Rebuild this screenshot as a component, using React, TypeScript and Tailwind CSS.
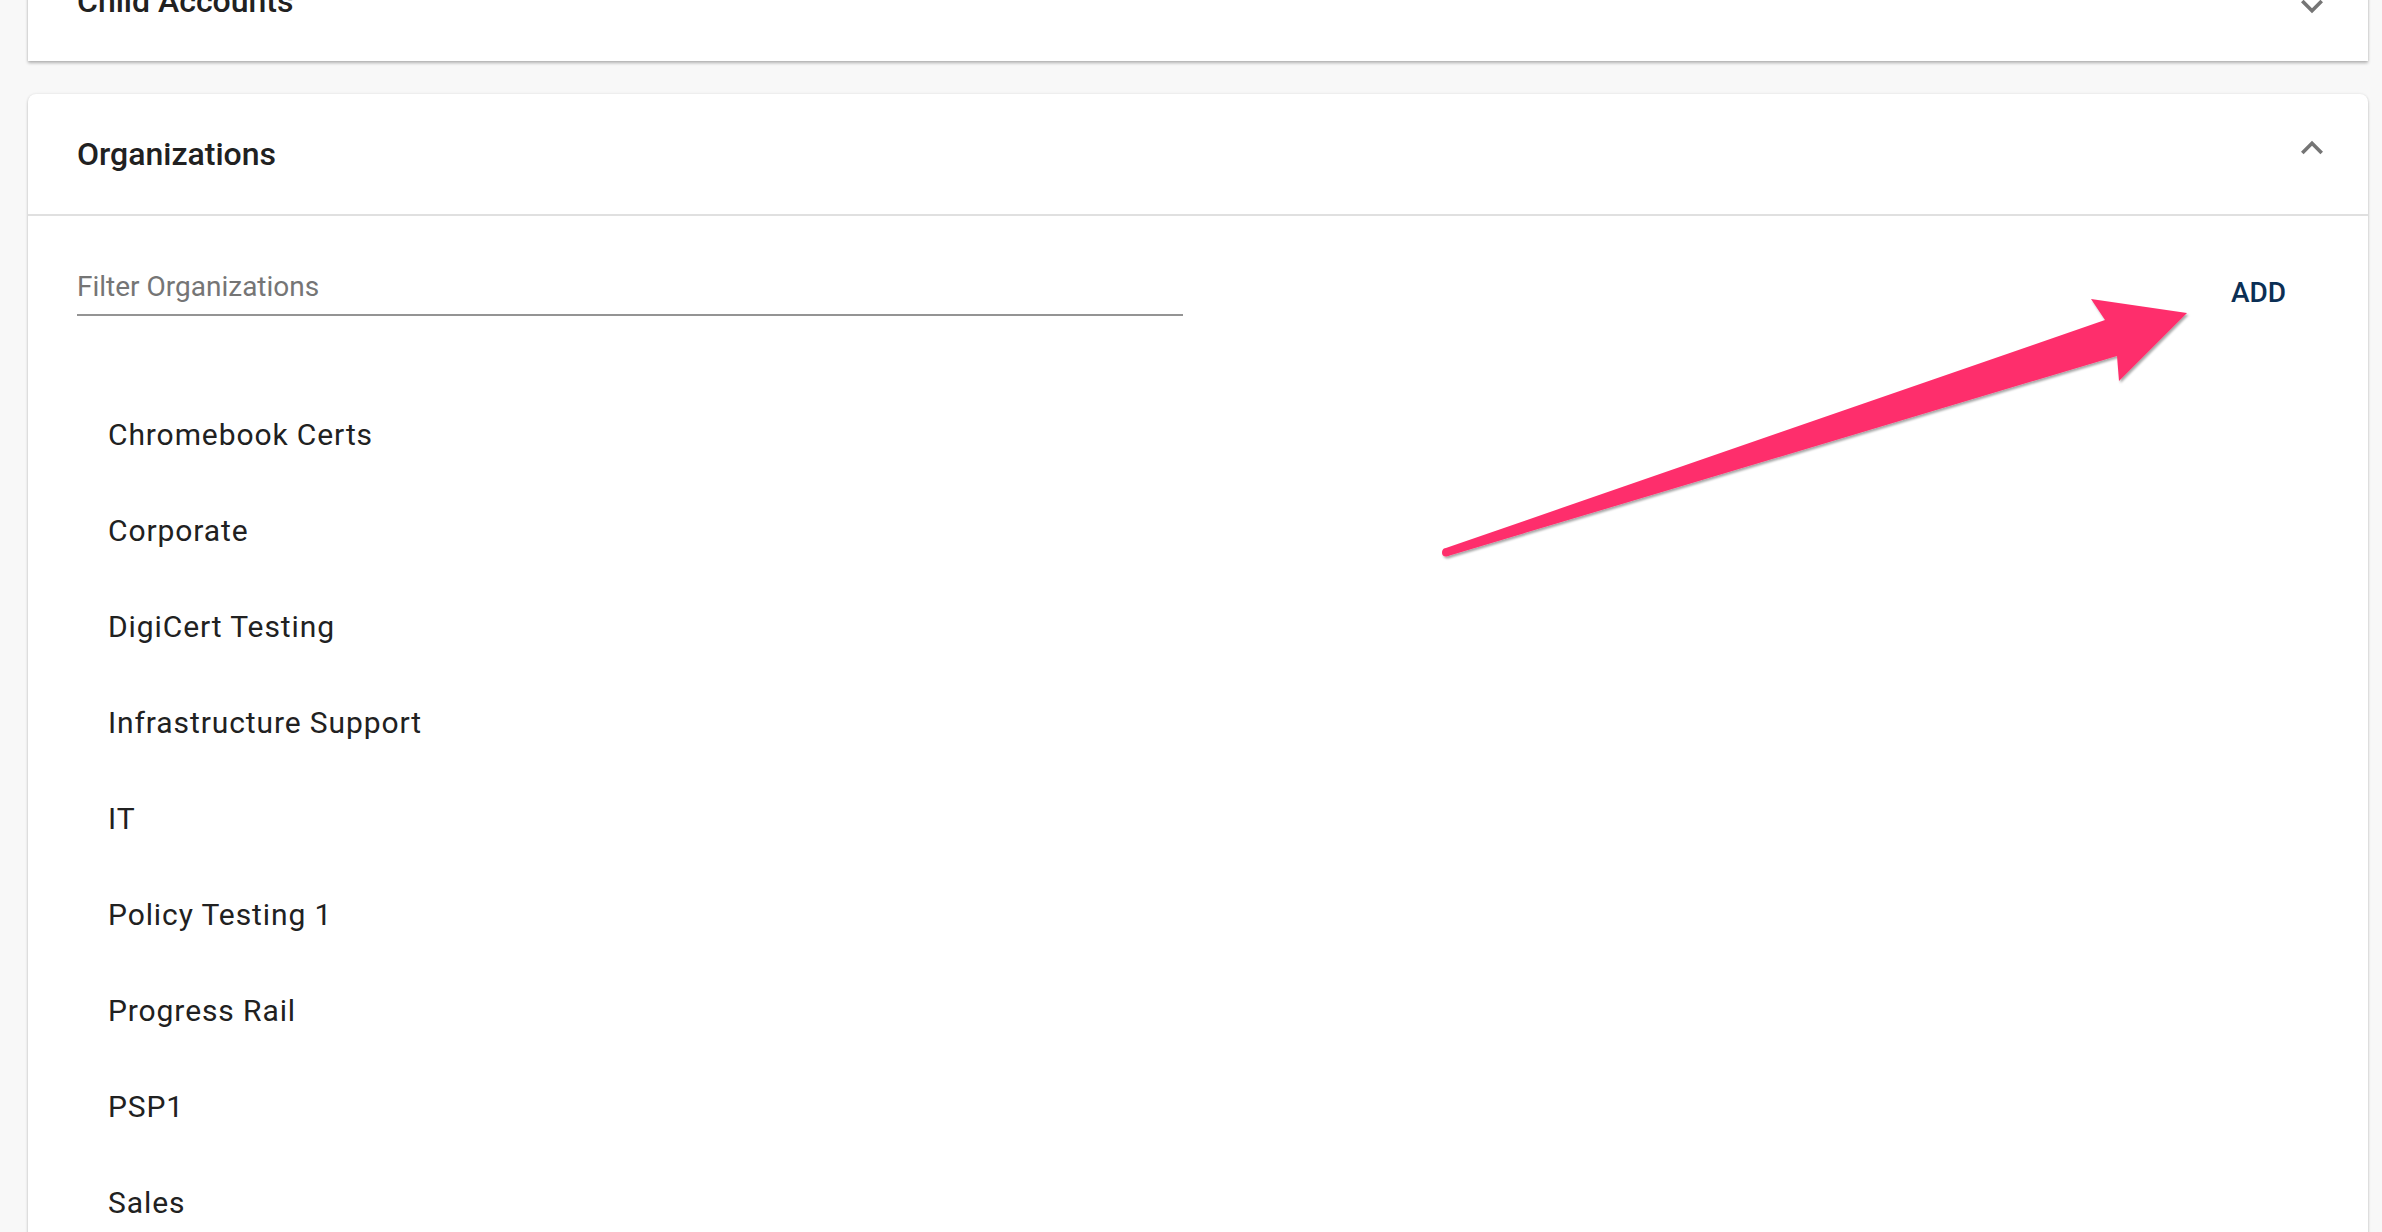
import React from "react";

const items = [
  "Chromebook Certs",
  "Corporate",
  "DigiCert Testing",
  "Infrastructure Support",
  "IT",
  "Policy Testing 1",
  "Progress Rail",
  "PSP1",
  "Sales",
];

function ChevronDown() {
  return (
    <svg width="44" height="44" viewBox="0 0 24 24" fill="#757575">
      <path d="M16.59 8.59L12 13.17 7.41 8.59 6 10l6 6 6-6z" />
    </svg>
  );
}

function ChevronUp() {
  return (
    <svg width="44" height="44" viewBox="0 0 24 24" fill="#757575">
      <path d="M12 8l-6 6 1.41 1.41L12 10.83l4.59 4.58L18 14z" />
    </svg>
  );
}

function Arrow() {
  return (
    <svg
      className="absolute left-0 top-0 pointer-events-none"
      width="2382"
      height="1232"
      viewBox="0 0 2382 1232"
    >
      <defs>
        <filter id="sh" x="-10%" y="-10%" width="120%" height="120%">
          <feDropShadow dx="1.5" dy="2" stdDeviation="1.2" floodColor="#000" floodOpacity="0.35" />
        </filter>
      </defs>
      <g filter="url(#sh)">
        <polygon
          fill="#fe2f6c"
          points="1443,549 2105,320 2091,299 2187,313 2119,381 2117,356 1448,556"
        />
        <circle cx="1446" cy="552.5" r="4" fill="#fe2f6c" />
      </g>
    </svg>
  );
}

export default function App() {
  return (
    <div
      className="relative h-[1232px] overflow-hidden bg-[#f8f8f8] pl-[28px] pr-[14px]"
      style={{ fontFamily: "Roboto, 'Liberation Sans', sans-serif" }}
    >
      <div className="flex flex-col gap-[33px]">
        {/* Child Accounts (collapsed) */}
        <div className="mt-[-59px] bg-white shadow-[0_2px_3px_rgba(0,0,0,0.28),0_0_2px_rgba(0,0,0,0.08)]">
          <div className="flex h-[120px] items-center justify-between pl-[49px] pr-[34px]">
            <span className="text-[32px] font-medium text-[#212121]">Child Accounts</span>
            <div className="mt-[10px]">
              <ChevronDown />
            </div>
          </div>
        </div>

        {/* Organizations (expanded) */}
        <div className="rounded-t-[8px] bg-white shadow-[0_2px_3px_rgba(0,0,0,0.2),0_0_3px_rgba(0,0,0,0.1)]">
          <div className="flex h-[122px] items-center justify-between border-b-2 border-[#e0e0e0] pl-[49px] pr-[34px]">
            <span className="text-[32px] font-medium text-[#212121]">Organizations</span>
            <div className="mb-[13px]">
              <ChevronUp />
            </div>
          </div>

          <div className="flex items-start justify-between pl-[49px] pr-[82px]">
            <div className="mt-[44px] flex h-[56px] w-[1106px] items-center border-b-2 border-[#949494]">
              <span className="text-[28px] text-[#757575]">Filter Organizations</span>
            </div>
            <button className="mt-[51px] h-[52px] text-[28px] font-medium text-[#0b2f55]">
              ADD
            </button>
          </div>

          <div className="mt-[67px] flex flex-col">
            {items.map((name) => (
              <div key={name} className="flex h-[96px] items-center pl-[80px]">
                <span className="text-[30px] tracking-[0.9px] text-[#212121]">{name}</span>
              </div>
            ))}
          </div>
        </div>
      </div>
      <Arrow />
    </div>
  );
}
